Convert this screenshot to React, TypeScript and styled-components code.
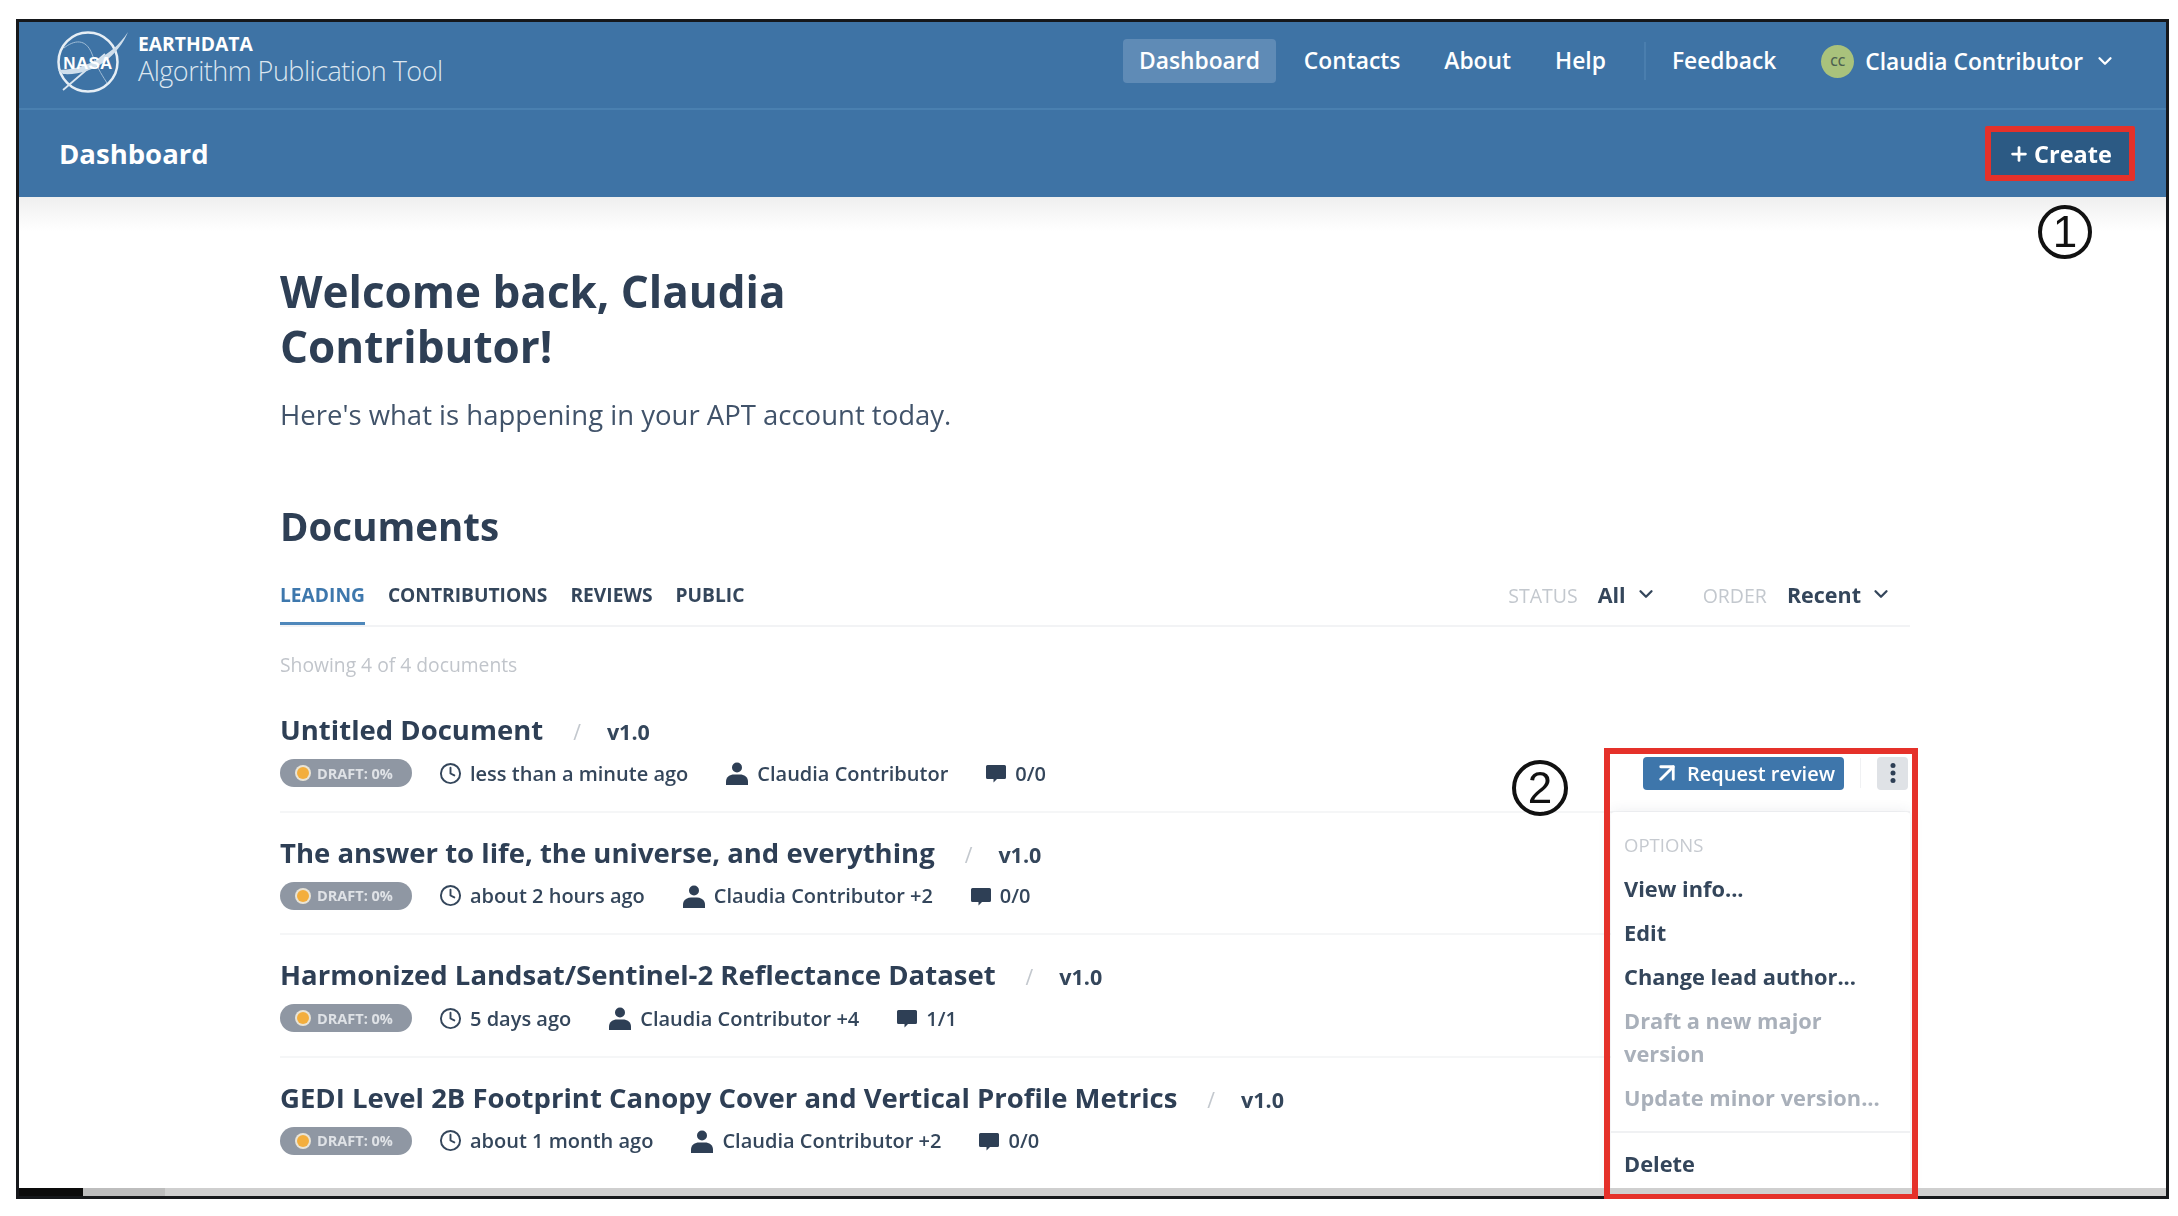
import React, { ReactElement } from 'react';
import styled, { createGlobalStyle } from 'styled-components';
import { ArrowUpRight, ChevronDown, Clock, Plus } from 'lucide-react';

interface DocumentEntry {
  title: string;
  age: string;
  authors: string;
  comments: string;
}

const documents: DocumentEntry[] = [
  { title: 'Untitled Document', age: 'less than a minute ago', authors: 'Claudia Contributor', comments: '0/0' },
  { title: 'The answer to life, the universe, and everything', age: 'about 2 hours ago', authors: 'Claudia Contributor +2', comments: '0/0' },
  { title: 'Harmonized Landsat/Sentinel-2 Reflectance Dataset', age: '5 days ago', authors: 'Claudia Contributor +4', comments: '1/1' },
  { title: 'GEDI Level 2B Footprint Canopy Cover and Vertical Profile Metrics', age: 'about 1 month ago', authors: 'Claudia Contributor +2', comments: '0/0' }
];

const GlobalStyle = createGlobalStyle`
  html, body {
    margin: 0;
    padding: 0;
    background: #fff;
  }

  body {
    font-family: "Open Sans", "Noto Sans", sans-serif;
    color: #2e3f55;
  }
`;

const Page = styled.div`
  width: 2178px;
  height: 1216px;
  padding: 19px 9px 17px 16px;
  box-sizing: border-box;
  overflow: hidden;
`;

const Frame = styled.div`
  position: relative;
  display: flex;
  flex-direction: column;
  height: 100%;
  box-sizing: border-box;
  border: 3px solid #16181b;
  border-bottom-width: 0;
  overflow: hidden;
  filter: blur(0.7px);
`;

const GlobalBar = styled.header`
  display: flex;
  align-items: center;
  flex: none;
  height: 88px;
  box-sizing: border-box;
  padding: 0 0 0 36px;
  background: #3e73a5;
  border-bottom: 2px solid #4a80b0;
  color: #fff;
`;

const Brand = styled.div`
  display: flex;
  align-items: center;
  gap: 7px;
  margin-bottom: 8px;
`;

const BrandText = styled.div`
  display: flex;
  flex-direction: column;
`;

const BrandOverline = styled.span`
  font-size: 19.3px;
  line-height: 20px;
  font-weight: 700;
`;

const BrandName = styled.span`
  font-size: 27px;
  line-height: 34px;
  font-weight: 300;
  letter-spacing: -0.5px;
  color: #dbe6f0;
`;

const Nav = styled.nav`
  display: flex;
  align-items: center;
  margin-left: auto;
  margin-right: 50px;
  margin-bottom: 8px;
`;

const NavItem = styled.a<{ $active?: boolean }>`
  display: block;
  padding: 0 16px;
  margin-right: 12px;
  height: 44px;
  line-height: 44px;
  border-radius: 4px;
  font-size: 22.8px;
  font-weight: 600;
  color: #fff;
  background: ${({ $active }) => ($active ? '#5f8bb6' : 'transparent')};
`;

const NavDivider = styled.span`
  width: 2px;
  height: 38px;
  margin: 0 10px;
  background: #4a7eae;
`;

const UserMenu = styled.div`
  display: flex;
  align-items: center;
  gap: 11px;
  margin-left: 17px;
  font-size: 22.8px;
  font-weight: 600;
`;

const Avatar = styled.span`
  display: flex;
  align-items: center;
  justify-content: center;
  width: 33px;
  height: 33px;
  border-radius: 50%;
  background: #a9c27c;
  color: #4d6150;
  font-size: 12px;
  font-weight: 600;
`;

const PageBar = styled.div`
  display: flex;
  align-items: center;
  justify-content: space-between;
  flex: none;
  height: 87px;
  box-sizing: border-box;
  padding: 0 31px 0 40px;
  background: #3e73a5;
  color: #fff;
`;

const PageTitle = styled.h2`
  margin: 0;
  font-size: 27.5px;
  font-weight: 700;
`;

const CreateButton = styled.button`
  display: flex;
  align-items: center;
  gap: 4px;
  height: 55px;
  width: 150px;
  box-sizing: border-box;
  justify-content: center;
  border: 6px solid #e5312a;
  border-radius: 2px;
  background: #2c5a84;
  color: #fff;
  font-family: inherit;
  font-size: 23.5px;
  font-weight: 700;
`;

const Content = styled.main`
  position: relative;
  flex: 1;
  min-height: 0;
  padding: 67px 0 0 261px;
  background: linear-gradient(#efefef 0, #fff 34px);
  overflow: hidden;
`;

const Inner = styled.div`
  width: 1630px;
`;

const Welcome = styled.h1`
  margin: 0;
  width: 640px;
  font-size: 44px;
  line-height: 55px;
  font-weight: 700;
  color: #2e3f55;
`;

const Lead = styled.p`
  margin: 21px 0 0;
  font-size: 27.5px;
  line-height: 40px;
  color: #41536a;
`;

const SectionTitle = styled.h2`
  margin: 66px 0 0;
  font-size: 38.5px;
  line-height: 50px;
  font-weight: 700;
  color: #2e3f55;
`;

const TabBar = styled.div`
  display: flex;
  align-items: center;
  height: 60px;
  margin-top: 14px;
  border-bottom: 2px solid #f2f3f5;
`;

const Tab = styled.a<{ $active?: boolean }>`
  display: flex;
  align-items: center;
  height: 60px;
  margin-right: 23px;
  box-sizing: border-box;
  border-bottom: 3px solid ${({ $active }) => ($active ? '#4f88bb' : 'transparent')};
  padding-top: 2px;
  font-size: 19.2px;
  font-weight: 700;
  color: ${({ $active }) => ($active ? '#3e78ad' : '#34465b')};
`;

const FilterGroup = styled.div`
  display: flex;
  align-items: center;
  margin-left: 28px;
  &:first-of-type {
    margin-left: auto;
  }
`;

const FilterLabel = styled.span`
  margin-right: 20px;
  font-size: 19.5px;
  color: #c3c8ce;
`;

const FilterValue = styled.span`
  display: flex;
  align-items: center;
  gap: 9px;
  margin-right: 18px;
  padding-bottom: 2px;
  font-size: 21.5px;
  font-weight: 700;
  color: #34465b;
`;

const Count = styled.div`
  margin-top: 24px;
  font-size: 19.3px;
  line-height: 28px;
  color: #c1c5cb;
`;

const DocList = styled.div`
  position: relative;
  margin-top: 11px;
`;

const DocRow = styled.article<{ $last: boolean }>`
  height: 122.5px;
  box-sizing: border-box;
  padding-top: 21px;
  border-bottom: ${({ $last }) => ($last ? '0' : '2px solid #f5f6f7')};
`;

const TitleLine = styled.div`
  display: flex;
  align-items: baseline;
  height: 38px;
`;

const DocTitle = styled.h3`
  margin: 0;
  font-size: 27.5px;
  line-height: 38px;
  font-weight: 700;
  color: #2e3f55;
`;

const Slash = styled.span`
  margin: 0 26px 0 30px;
  font-size: 21px;
  color: #c3c8ce;
`;

const Version = styled.span`
  font-size: 21.5px;
  font-weight: 700;
  color: #34465b;
`;

const MetaLine = styled.div`
  display: flex;
  align-items: center;
  height: 34px;
  margin-top: 7px;
  font-size: 20px;
  font-weight: 600;
  color: #34465b;
`;

const Pill = styled.span`
  display: flex;
  align-items: center;
  width: 132px;
  height: 28px;
  box-sizing: border-box;
  padding-left: 17px;
  gap: 8px;
  border-radius: 14px;
  background: #8f97a3;
  color: #dfe2e6;
  font-size: 14.5px;
  font-weight: 700;
`;

const Dot = styled.span`
  width: 12px;
  height: 12px;
  border-radius: 50%;
  background: #f3ae3d;
  box-shadow: 0 0 0 2px #e9e4d6;
`;

const MetaItem = styled.span<{ $gap: number }>`
  display: flex;
  align-items: center;
  gap: 8px;
  margin-left: ${({ $gap }) => $gap}px;
  white-space: nowrap;
`;

const Actions = styled.div`
  display: flex;
  align-items: center;
  margin-left: auto;
  margin-right: 2px;
`;

const ReviewButton = styled.button`
  display: flex;
  align-items: center;
  justify-content: center;
  gap: 5px;
  width: 201px;
  height: 33px;
  padding: 0;
  border: 0;
  border-radius: 4px;
  background: #3e76ab;
  color: #fff;
  font-family: inherit;
  font-size: 20px;
  font-weight: 600;
`;

const ActionDivider = styled.span`
  width: 1px;
  height: 30px;
  margin: 0 16px;
  background: #f0f1f3;
`;

const KebabButton = styled.button`
  display: flex;
  align-items: center;
  justify-content: center;
  width: 31px;
  height: 33px;
  padding: 0;
  border: 0;
  border-radius: 4px;
  background: #dfe2e6;
  color: #2e3f55;
`;

const Menu = styled.div`
  position: absolute;
  top: 122px;
  right: 0;
  width: 299px;
  box-sizing: border-box;
  padding: 18px 0 0;
  background: #fff;
  border-radius: 4px;
  box-shadow: 0 0 14px rgba(46, 63, 85, 0.1);
`;

const MenuHeading = styled.div`
  padding: 0 13px;
  height: 30px;
  line-height: 30px;
  font-size: 18.5px;
  color: #c6cad0;
`;

const MenuItem = styled.div<{ $disabled?: boolean }>`
  padding: 5.500px 13px;
  font-size: 21.8px;
  line-height: 33px;
  font-weight: 700;
  color: ${({ $disabled }) => ($disabled ? '#a9b0ba' : '#34465b')};
`;

const MenuList = styled.div`
  margin-top: 6px;
  padding-bottom: 12px;
  border-bottom: 2px solid #f0f1f3;
`;

const MenuFooter = styled.div`
  padding-top: 8px;
  padding-bottom: 10px;
`;

const Scrollbar = styled.div`
  display: flex;
  flex: none;
  height: 8px;
  background: #cfcfcf;
  border-bottom: 3px solid #16181b;
  box-sizing: content-box;
`;

const ScrollThumb = styled.span<{ $width: number; $tone: string }>`
  width: ${({ $width }) => $width}px;
  background: ${({ $tone }) => $tone};
`;

const CalloutBox = styled.div`
  position: absolute;
  left: 1585px;
  top: 726px;
  width: 314px;
  height: 452px;
  box-sizing: border-box;
  border: 6px solid #e5312a;
`;

const CalloutNumber = styled.div<{ $left: number; $top: number; $size: number }>`
  position: absolute;
  left: ${({ $left }) => $left}px;
  top: ${({ $top }) => $top}px;
  display: flex;
  align-items: center;
  justify-content: center;
  width: ${({ $size }) => $size}px;
  height: ${({ $size }) => $size}px;
  box-sizing: border-box;
  border: 4px solid #111;
  border-radius: 50%;
  background: #fff;
  color: #111;
  font-family: "Liberation Sans", sans-serif;
  font-size: 44px;
`;

const NasaLogo = (): ReactElement => (
  <svg width="76" height="66" viewBox="0 0 76 66" fill="none">
    <circle cx="33" cy="34" r="29.5" stroke="#e6eef5" strokeWidth="2.500" />
    <path d="M9 20c10-8 22-10 28 6s12 24 15 29" stroke="#9fbcd6" strokeWidth="1" />
    <path d="M8 62L50 26" stroke="#dbe6f0" strokeWidth="1.800" />
    <path d="M3 42C26 42 56 30 73 4C63 28 38 48 8 46Z" fill="#cfdeeb" />
    <text
      x="33"
      y="41"
      textAnchor="middle"
      fontFamily="Liberation Sans, sans-serif"
      fontSize="17"
      fontWeight="700"
      fill="#fff"
      letterSpacing="0.3"
    >
      NASA
    </text>
  </svg>
);

const PersonIcon = (): ReactElement => (
  <svg width="24" height="24" viewBox="0 0 24 24" fill="#2e3f55">
    <circle cx="12" cy="6.500" r="5" />
    <path d="M1 24v-3.500C1 16 5 13.500 9 13.500h6c4 0 8 2.500 8 7V24Z" />
  </svg>
);

const CommentIcon = (): ReactElement => (
  <svg width="22" height="22" viewBox="0 0 22 22" fill="#2e3f55">
    <path d="M2.500 3h17A1.500 1.500 0 0 1 21 4.500v11a1.500 1.500 0 0 1-1.500 1.500H12l-3.500 3.500V17h-6A1.500 1.500 0 0 1 1 15.500v-11A1.500 1.500 0 0 1 2.500 3Z" />
  </svg>
);

const KebabIcon = (): ReactElement => (
  <svg width="8" height="22" viewBox="0 0 8 22" fill="currentColor">
    <circle cx="4" cy="3.500" r="2.500" />
    <circle cx="4" cy="11" r="2.500" />
    <circle cx="4" cy="18.500" r="2.500" />
  </svg>
);

export default function App(): ReactElement {
  return (
    <Page>
      <GlobalStyle />
      <Frame>
        <GlobalBar>
          <Brand>
            <NasaLogo />
            <BrandText>
              <BrandOverline>EARTHDATA</BrandOverline>
              <BrandName>Algorithm Publication Tool</BrandName>
            </BrandText>
          </Brand>
          <Nav>
            <NavItem $active>Dashboard</NavItem>
            <NavItem>Contacts</NavItem>
            <NavItem>About</NavItem>
            <NavItem>Help</NavItem>
            <NavDivider />
            <NavItem>Feedback</NavItem>
            <UserMenu>
              <Avatar>CC</Avatar>
              Claudia Contributor
              <ChevronDown size={22} strokeWidth={2.5} />
            </UserMenu>
          </Nav>
        </GlobalBar>
        <PageBar>
          <PageTitle>Dashboard</PageTitle>
          <CreateButton>
            <Plus size={22} strokeWidth={3} />
            Create
          </CreateButton>
        </PageBar>
        <Content>
          <Inner>
            <Welcome>Welcome back, Claudia Contributor!</Welcome>
            <Lead>Here's what is happening in your APT account today.</Lead>
            <SectionTitle>Documents</SectionTitle>
            <TabBar>
              <Tab $active>LEADING</Tab>
              <Tab>CONTRIBUTIONS</Tab>
              <Tab>REVIEWS</Tab>
              <Tab>PUBLIC</Tab>
              <FilterGroup>
                <FilterLabel>STATUS</FilterLabel>
                <FilterValue>
                  All
                  <ChevronDown size={22} strokeWidth={2.5} />
                </FilterValue>
              </FilterGroup>
              <FilterGroup>
                <FilterLabel>ORDER</FilterLabel>
                <FilterValue>
                  Recent
                  <ChevronDown size={22} strokeWidth={2.5} />
                </FilterValue>
              </FilterGroup>
            </TabBar>
            <Count>Showing 4 of 4 documents</Count>
            <DocList>
              {documents.map((doc: DocumentEntry, index: number) => (
                <DocRow key={doc.title} $last={index === documents.length - 1}>
                  <TitleLine>
                    <DocTitle>{doc.title}</DocTitle>
                    <Slash>/</Slash>
                    <Version>v1.0</Version>
                  </TitleLine>
                  <MetaLine>
                    <Pill>
                      <Dot />
                      DRAFT: 0%
                    </Pill>
                    <MetaItem $gap={27}>
                      <Clock size={23} strokeWidth={2} />
                      {doc.age}
                    </MetaItem>
                    <MetaItem $gap={37}>
                      <PersonIcon />
                      {doc.authors}
                    </MetaItem>
                    <MetaItem $gap={37}>
                      <CommentIcon />
                      {doc.comments}
                    </MetaItem>
                    {index === 0 && (
                      <Actions>
                        <ReviewButton>
                          <ArrowUpRight size={30} strokeWidth={2.25} />
                          Request review
                        </ReviewButton>
                        <ActionDivider />
                        <KebabButton>
                          <KebabIcon />
                        </KebabButton>
                      </Actions>
                    )}
                  </MetaLine>
                </DocRow>
              ))}
              <Menu>
                <MenuHeading>OPTIONS</MenuHeading>
                <MenuList>
                  <MenuItem>View info...</MenuItem>
                  <MenuItem>Edit</MenuItem>
                  <MenuItem>Change lead author...</MenuItem>
                  <MenuItem $disabled>Draft a new major version</MenuItem>
                  <MenuItem $disabled>Update minor version...</MenuItem>
                </MenuList>
                <MenuFooter>
                  <MenuItem>Delete</MenuItem>
                </MenuFooter>
              </Menu>
            </DocList>
          </Inner>
        </Content>
        <Scrollbar>
          <ScrollThumb $width={64} $tone="#0c0c0c" />
          <ScrollThumb $width={82} $tone="#bdbdbd" />
        </Scrollbar>
        <CalloutBox />
        <CalloutNumber $left={2019} $top={183} $size={54}>1</CalloutNumber>
        <CalloutNumber $left={1493} $top={738} $size={56}>2</CalloutNumber>
      </Frame>
    </Page>
  );
}
